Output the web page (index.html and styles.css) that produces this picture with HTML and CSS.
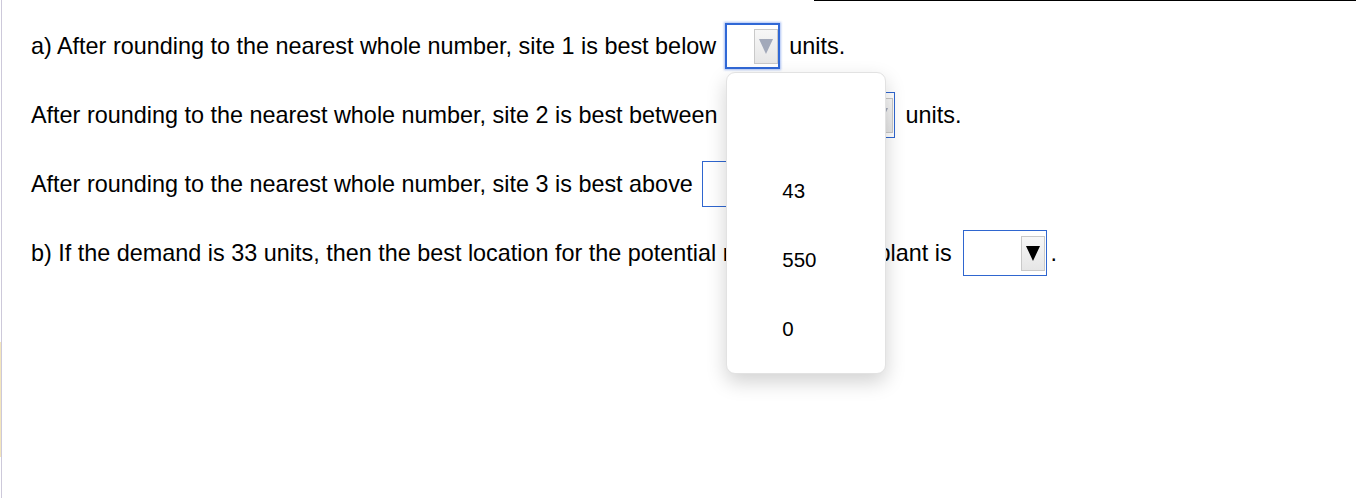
FILE: index.html
```html
<!DOCTYPE html>
<html>
<head>
<meta charset="utf-8">
<link rel="stylesheet" href="styles.css">
</head>
<body>
<div class="page">
  <div class="rows">
    <div class="row">
      <span class="txt">a) After rounding to the nearest whole number, site 1 is best below</span>
      <div class="sel sel-focus w1 m-a">
        <span class="btn"><span class="tri tri-grey"></span></span>
        <div class="menu">
          <div class="opt"></div>
          <div class="opt">43</div>
          <div class="opt">550</div>
          <div class="opt">0</div>
        </div>
      </div>
      <span class="txt m-u1">units.</span>
    </div>
    <div class="row">
      <span class="txt">After rounding to the nearest whole number, site 2 is best between</span>
      <div class="sel w2 m-b">
        <span class="btn btn-narrow"><span class="tri tri-grey"></span></span>
      </div>
      <span class="txt m-u2">units.</span>
    </div>
    <div class="row">
      <span class="txt">After rounding to the nearest whole number, site 3 is best above</span>
      <div class="sel w3 m-c">
        <span class="btn"><span class="tri tri-grey"></span></span>
      </div>
    </div>
    <div class="row">
      <span class="txt">b) If the demand is 33 units, then the best location for the potential manufacturing plant is</span>
      <div class="sel w4 m-d">
        <span class="btn"><span class="tri tri-black"></span></span>
      </div>
      <span class="txt m-p">.</span>
    </div>
  </div>
</div>
</body>
</html>
```

FILE: styles.css
```css
html, body {
  margin: 0;
  padding: 0;
}
body {
  width: 1356px;
  height: 498px;
  overflow: hidden;
  background:
    linear-gradient(#000, #000) 814px 0 / 542px 1px no-repeat,
    linear-gradient(#f4e6bc, #f4e6bc) 0 342px / 1px 115px no-repeat,
    #fff;
  font-family: "Liberation Sans", Arial, Helvetica, sans-serif;
  font-size: 23.4px;
  color: #000;
}
.page {
  margin-left: 1px;
  border-left: 1px solid #cdc9da;
  height: 498px;
  box-sizing: border-box;
  padding: 23px 0 0 29px;
}
.rows {
  display: flex;
  flex-direction: column;
  gap: 23px;
}
.row {
  display: flex;
  align-items: center;
  height: 46px;
}
.txt {
  white-space: pre;
  line-height: 26px;
}
.sel {
  position: relative;
  height: 46px;
  box-sizing: border-box;
  border: 1px solid #2f66cf;
  background: #fff;
  display: flex;
  align-items: center;
  justify-content: flex-end;
  padding-right: 1px;
}
.sel-focus {
  border: 2px solid #3068d6;
  box-shadow: 0 0 2px 1px rgba(70, 120, 230, 0.45);
  padding-right: 0;
}
.w1 { width: 55px; }
.w2 { width: 168px; }
.w3 { width: 60px; }
.w4 { width: 84px; height: 46px; }
.m-a { margin-left: 9px; }
.m-u1 { margin-left: 9px; }
.m-b { margin-left: 9px; }
.m-u2 { margin-left: 11px; }
.m-c { margin-left: 9px; }
.m-d { margin-left: 11px; }
.m-p { margin-left: 4px; }
.btn {
  width: 24px;
  height: 35px;
  box-sizing: border-box;
  border: 1px solid #c9c9c9;
  background: linear-gradient(#f7f7f7, #e6e6e6);
  display: flex;
  align-items: center;
  justify-content: center;
}
.btn-narrow { width: 24px; }
.tri {
  width: 0;
  height: 0;
  border-left: 7px solid transparent;
  border-right: 7px solid transparent;
}
.tri-grey { border-top: 15px solid #a2a9ba; }
.tri-black { border-top: 15px solid #000; }
.menu {
  position: absolute;
  top: calc(100% + 5px);
  left: -1px;
  width: 160px;
  box-sizing: border-box;
  padding: 14px 0 10px;
  background: #fff;
  border: 1px solid #e2e2e2;
  border-radius: 9px;
  box-shadow: 0 8px 20px rgba(0, 0, 0, 0.18);
  z-index: 5;
}
.opt {
  height: 69px;
  line-height: 69px;
  padding-left: 55px;
  font-size: 20.5px;
}
```
